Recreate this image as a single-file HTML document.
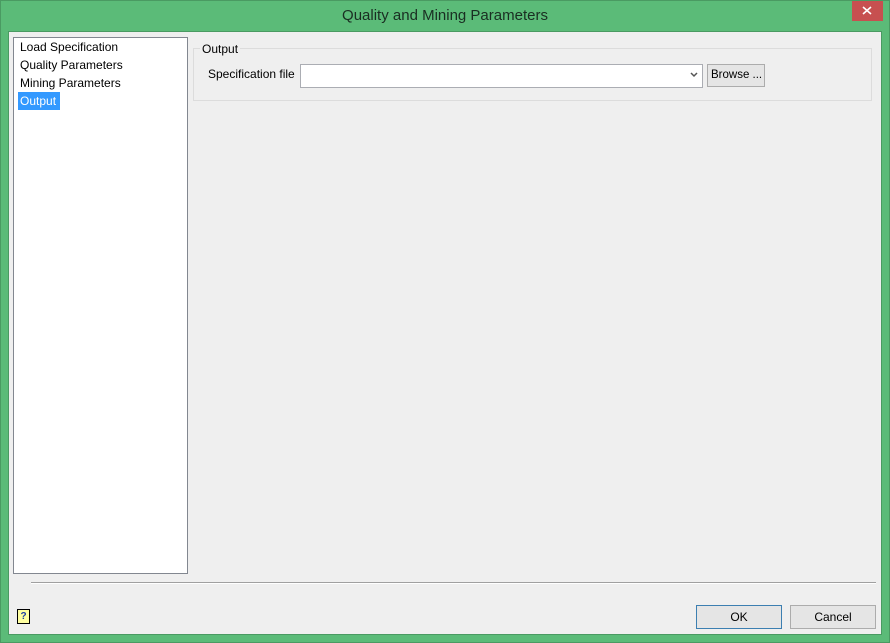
<!DOCTYPE html>
<html><head><style>
body{margin:0;width:890px;height:643px;background:#5bbb78;font-family:"Liberation Sans",sans-serif;font-size:12px;color:#000;position:relative;overflow:hidden}
div{position:absolute;box-sizing:border-box}
.t{white-space:nowrap}
</style></head><body>
<div style="left:0;top:0;width:890px;height:643px;border:1px solid #4a9a62"></div>
<div class="t" style="left:0;top:7px;width:890px;text-align:center;font-size:15px;color:#1a2e22">Quality and Mining Parameters</div>
<div style="left:852px;top:1px;width:31px;height:20px;background:#c75050"></div>
<svg style="position:absolute;left:862px;top:6px" width="10" height="9"><path d="M1 1L9 8M9 1L1 8" stroke="#fff" stroke-width="1.6"/></svg>
<div style="left:8px;top:31px;width:874px;height:604px;background:#efefef;border:1px solid #4a9a62"></div>
<div style="left:13px;top:37px;width:175px;height:537px;background:#fff;border:1px solid #828790"></div>
<div class="t" style="left:20px;top:40px">Load Specification</div>
<div class="t" style="left:20px;top:58px">Quality Parameters</div>
<div class="t" style="left:20px;top:76px">Mining Parameters</div>
<div class="t" style="left:18px;top:92px;width:42px;height:18px;background:#3399ff;color:#fff;padding:2px 0 0 2px">Output</div>
<div style="left:193px;top:48px;width:679px;height:53px;border:1px solid #dcdcdc"></div>
<div class="t" style="left:200px;top:42px;background:#efefef;padding:0 2px">Output</div>
<div class="t" style="left:208px;top:67px">Specification file</div>
<div style="left:300px;top:64px;width:403px;height:24px;background:#fff;border:1px solid #abadb3"></div>
<svg style="position:absolute;left:690px;top:72px" width="8" height="6"><path d="M1 1L4 4L7 1" stroke="#555" stroke-width="1.5" fill="none"/></svg>
<div style="left:707px;top:64px;width:58px;height:23px;background:#e5e5e5;border:1px solid #acacac"></div>
<div class="t" style="left:711px;top:69px;font-size:11.5px">Browse ...</div>
<div style="left:31px;top:582px;width:845px;height:2px;border-top:1px solid #a0a0a0;border-bottom:1px solid #fff"></div>
<div style="left:17px;top:609px;width:13px;height:15px;background:#ffffa0;border:1px solid #000;font-size:10px;text-align:center;line-height:13px;font-weight:bold;color:#2040a0">?</div>
<div style="left:696px;top:605px;width:86px;height:24px;background:#e5e5e5;border:1px solid #3c7fb1"></div>
<div class="t" style="left:696px;top:610px;width:86px;text-align:center">OK</div>
<div style="left:790px;top:605px;width:86px;height:24px;background:#e5e5e5;border:1px solid #acacac"></div>
<div class="t" style="left:790px;top:610px;width:86px;text-align:center">Cancel</div>
</body></html>
